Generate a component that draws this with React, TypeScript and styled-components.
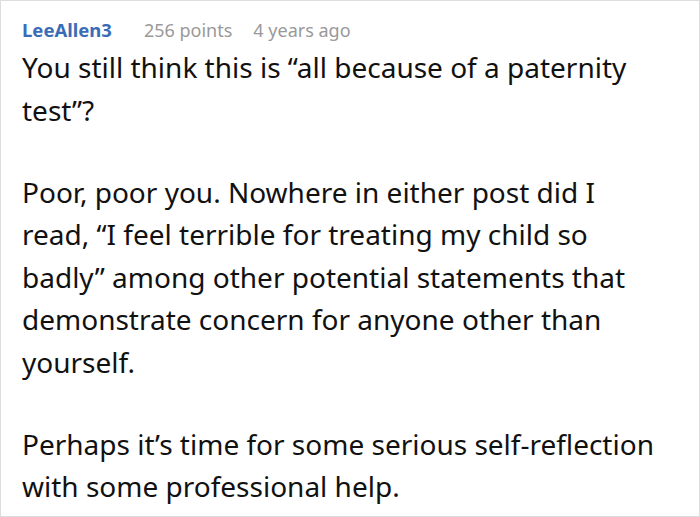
import styled, { createGlobalStyle } from "styled-components";

const GlobalStyle = createGlobalStyle`
  html, body {
    margin: 0;
    padding: 0;
    background: #ffffff;
  }
`;

const Card = styled.div`
  box-sizing: border-box;
  width: 700px;
  height: 517px;
  border: 1px solid #dddddd;
  background: #ffffff;
  padding: 16px 37px 0 21px;
  font-family: "Noto Sans", "Open Sans", sans-serif;
  overflow: hidden;
`;

const Meta = styled.div`
  display: flex;
  align-items: baseline;
  font-size: 18px;
  line-height: 26px;
  margin-bottom: 3px;
`;

const Author = styled.span`
  color: #3b6cb5;
  font-size: 18.5px;
  font-weight: 700;
  margin-right: 11px;
`;

const Info = styled.span`
  color: #999999;
  margin-left: 21px;
`;

const Paragraph = styled.p`
  margin: 0 0 39.5px 0;
  font-size: 28px;
  line-height: 42.5px;
  color: #111111;
`;

const App = () => {
  return (
    <>
      <GlobalStyle />
      <Card>
        <Meta>
          <Author>LeeAllen3</Author>
          <Info>256 points</Info>
          <Info>4 years ago</Info>
        </Meta>
        <Paragraph>You still think this is “all because of a paternity test”?</Paragraph>
        <Paragraph>
          Poor, poor you. Nowhere in either post did I read, “I feel terrible for treating my child so
          badly” among other potential statements that demonstrate concern for anyone other than
          yourself.
        </Paragraph>
        <Paragraph>Perhaps it’s time for some serious self-reflection with some professional help.</Paragraph>
      </Card>
    </>
  );
};

export default App;
